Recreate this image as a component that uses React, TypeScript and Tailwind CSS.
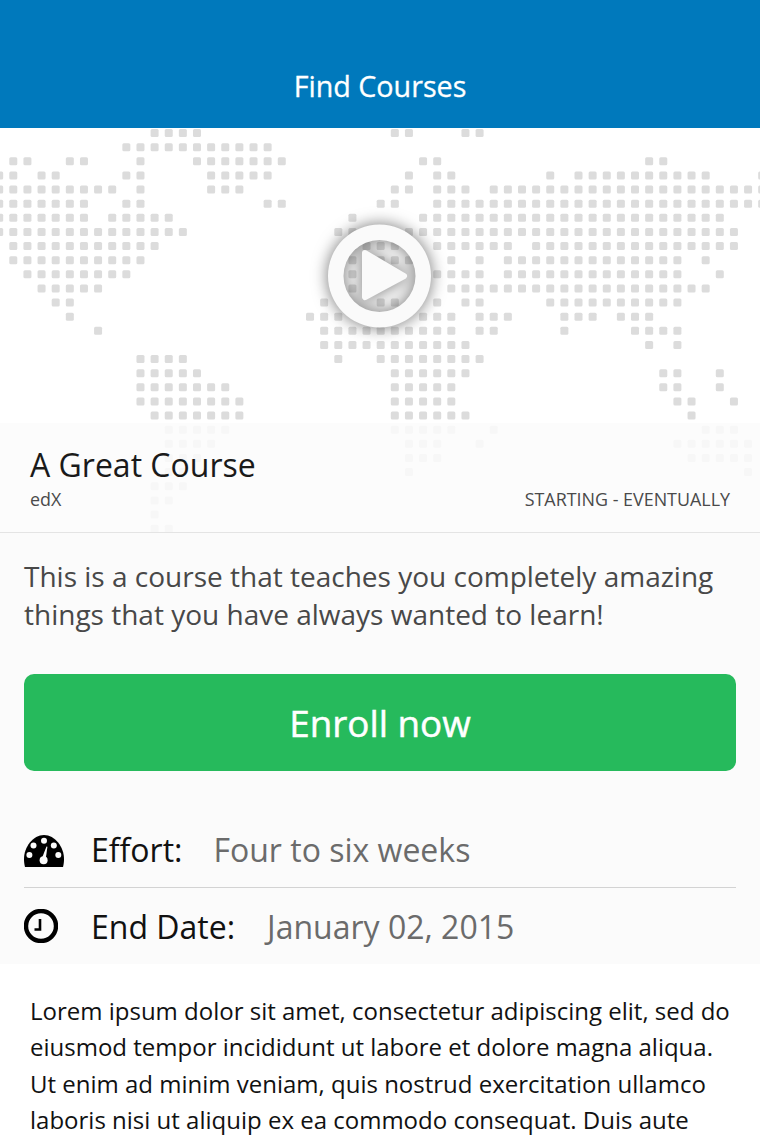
import React from "react";

const rows: [number, number][][] = [
  [[10,13],[27,28],[32,33]],
  [[8,18]],
  [[0,1],[4,5],[9,9],[13,19],[29,30],[45,46]],
  [[-1,0],[2,3],[8,9],[14,18],[28,28],[30,31],[38,38],[40,49],[53,53]],
  [[-1,7],[9,9],[14,16],[27,28],[30,32],[34,53]],
  [[-1,5],[8,9],[18,19],[26,27],[30,53]],
  [[-1,5],[7,11],[24,24],[29,50]],
  [[-1,12],[23,24],[28,51]],
  [[0,10],[24,28],[30,35],[37,51]],
  [[0,9],[24,29],[31,31],[33,33],[35,47],[49,49]],
  [[1,8],[24,24],[27,27],[30,33],[35,47],[50,50]],
  [[2,6],[24,24],[31,49]],
  [[3,4],[22,22],[26,27],[30,30],[32,33],[38,47]],
  [[4,4],[21,23],[29,31],[33,35],[39,41],[43,45]],
  [[6,6],[22,31],[33,34],[39,39],[44,47]],
  [[22,32],[45,45],[47,47]],
  [[9,12],[23,23],[26,33]],
  [[9,13],[27,32],[46,47],[50,50]],
  [[9,15],[27,31],[46,47],[50,50]],
  [[9,16],[27,31],[47,48],[51,51]],
  [[10,16],[27,32],[48,48]],
  [[11,15],[27,31],[34,34],[49,51]],
  [[11,14],[28,30],[33,33],[47,52]],
  [[11,13],[28,30],[48,52]],
  [[11,12],[28,28],[52,52]],
  [[10,12]],
  [[10,11]],
  [[10,10]],
  [[10,11]],
];

function WorldMap() {
  const dots: React.ReactNode[] = [];
  rows.forEach((spans, r) => {
    spans.forEach(([a, b]) => {
      for (let c = a; c <= b; c++) {
        dots.push(
          <rect key={`${r}-${c}`} x={13.3 + 14.13 * c - 4} y={5 + 14.13 * r - 4} width={8} height={8} rx={1.5} />
        );
      }
    });
  });
  return (
    <svg className="absolute left-0 top-0 blur-[0.5px]" width={760} height={412} viewBox="0 0 760 412" fill="#dcdcdc">
      {dots}
    </svg>
  );
}

function PlayButton() {
  return (
    <svg
      className="absolute left-[319px] top-[88px] drop-shadow-[0_0_8px_rgba(0,0,0,0.55)]"
      width={122}
      height={120}
      viewBox="0 0 122 120"
    >
      <path
        fill="#fafafa"
        fillRule="evenodd"
        d="M60.5 8.5a51.5 51.5 0 1 0 0 103a51.5 51.5 0 1 0 0-103zM60.5 24a36 36 0 1 1 0 72a36 36 0 1 1 0-72z"
      />
      <path
        fill="#fafafa"
        stroke="#fafafa"
        strokeWidth={6}
        strokeLinejoin="round"
        d="M46 37L85 60L46 81Z"
      />
    </svg>
  );
}

function Gauge() {
  return (
    <svg width={40} height={32} viewBox="0 0 40 32" className="mt-[2px] shrink-0">
      <path
        fill="#000"
        fillRule="evenodd"
        d="M1 32C0.3 29 0 27 0 24C0 12 9 0 20 0C31 0 40 12 40 24C40 27 39.7 29 39 32Z"
      />
      <g fill="#fbfbfb">
        <circle cx={20} cy={5.7} r={3} />
        <circle cx={9.5} cy={10.5} r={3} />
        <circle cx={29.8} cy={10.5} r={3} />
        <circle cx={5.4} cy={20} r={3} />
        <circle cx={34.3} cy={20} r={3} />
        <circle cx={19.6} cy={25.2} r={4} />
        <path d="M17.6 24L22.5 11.5L23.4 11.8L21.6 25Z" />
      </g>
    </svg>
  );
}

function Clock() {
  return (
    <svg width={34} height={34} viewBox="0 0 34 34" className="mb-[3px] shrink-0">
      <circle cx={17} cy={17} r={15} fill="none" stroke="#000" strokeWidth={4.4} />
      <path d="M16 10V20.5H10.5" fill="none" stroke="#000" strokeWidth={2.6} />
    </svg>
  );
}

export default function App() {
  return (
    <div className="h-[1136px] w-[760px] overflow-hidden bg-white font-['Open_Sans',sans-serif]">
      <header className="flex h-[128px] items-end justify-center bg-[#0079bc] pb-[21px]">
        <h1 className="text-[28.7px] font-normal leading-[42px] text-white [-webkit-text-stroke:0.3px_white]">Find Courses</h1>
      </header>
      <main className="relative">
        <WorldMap />
        <PlayButton />
        <div className="h-[295px]" />
        <section className="relative bg-[#fbfbfb]/85">
          <div className="flex h-[110px] flex-col border-b border-[#e4e4e4] px-[30px] pt-[21px]">
            <h2 className="text-[32px] leading-[42px] text-[#1a1a1a]">A Great Course</h2>
            <div className="flex items-center justify-between text-[17.9px] leading-[26px] text-[#4a4a4a]">
              <span>edX</span>
              <span>STARTING - EVENTUALLY</span>
            </div>
          </div>
          <div className="bg-[#fbfbfb] px-[24px] pb-[11px] pt-[25px]">
            <p className="text-[28px] leading-[37.5px] text-[#484848]">
              This is a course that teaches you completely amazing things that you have always wanted to learn!
            </p>
            <button className="mt-[41px] flex h-[97px] w-full items-center justify-center rounded-[10px] bg-[#26ba5c] pt-[2px] text-[36.8px] font-normal text-white [-webkit-text-stroke:0.5px_white]">
              Enroll now
            </button>
            <div className="mt-[40px] flex h-[77px] items-center gap-[27px] border-b border-[#d3d3d3] pt-[2px]">
              <Gauge />
              <div className="flex items-baseline gap-[31px] text-[32px] leading-[44px]">
                <span className="text-[#111111]">Effort:</span>
                <span className="text-[#6b6b6b]">Four to six weeks</span>
              </div>
            </div>
            <div className="flex h-[65px] items-center gap-[33px] pt-[13px]">
              <Clock />
              <div className="flex items-baseline gap-[32px] text-[32px] leading-[44px]">
                <span className="text-[#111111]">End Date:</span>
                <span className="text-[#6b6b6b]">January 02, 2015</span>
              </div>
            </div>
          </div>
        </section>
        <p className="px-[30px] pt-[29px] text-[24px] leading-[36.4px] text-[#111111]">
          Lorem ipsum dolor sit amet, consectetur adipiscing elit, sed do eiusmod tempor incididunt ut labore et dolore magna aliqua. Ut enim ad minim veniam, quis nostrud exercitation ullamco laboris nisi ut aliquip ex ea commodo consequat. Duis aute
        </p>
      </main>
    </div>
  );
}
